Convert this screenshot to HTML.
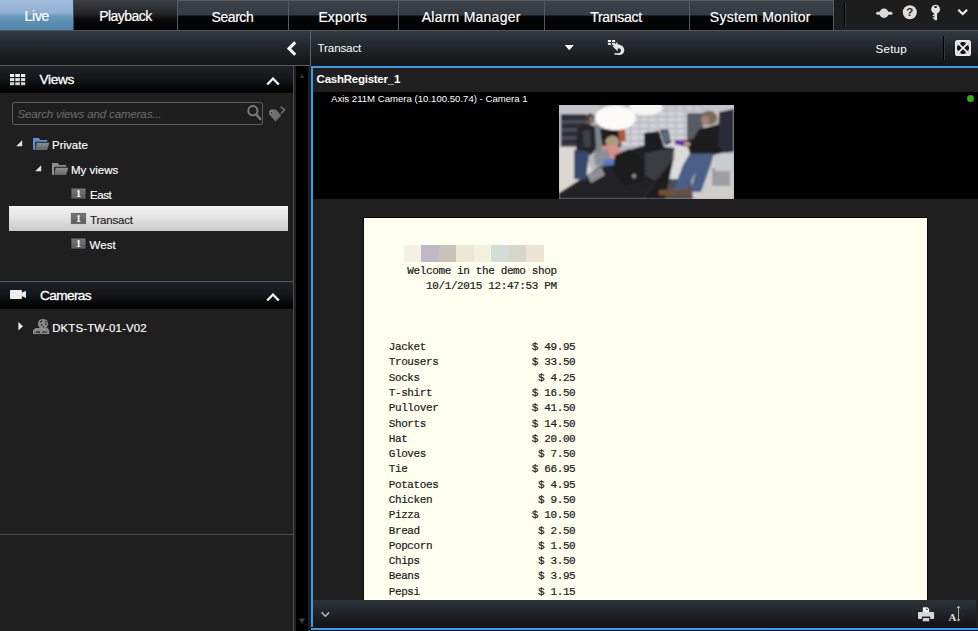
<!DOCTYPE html>
<html lang="en">
<head>
<meta charset="utf-8">
<title>Smart Client - Transact</title>
<style>
*{box-sizing:border-box;margin:0;padding:0}
html,body{width:978px;height:631px;overflow:hidden;background:#1f1f1f}
body{position:relative;font-family:"Liberation Sans",sans-serif;color:#fff;font-size:13px}
.a{position:absolute}
.t{position:absolute;white-space:nowrap;line-height:1;transform-origin:0 0}
/* tabs */
#tabs{left:0;top:0;width:978px;height:30px;background:#1d1d1d}
.tab{position:absolute;top:0;height:30px;border-left:1px solid #555b60;border-top:1px solid #555b60;
 background:linear-gradient(#3a4149 0,#363c43 14px,#060606 15px,#030303 100%)}
.tt{font-size:14px;-webkit-text-stroke:0.2px #fff}
.ltab{position:absolute;top:0;height:30px}
#live{left:0;width:73px;background:linear-gradient(#a3bcdc 0,#8fb0d2 13px,#6a9abd 16px,#5a8fb1 22px,#4f86a8 100%)}
#pb{left:73px;width:104px;border-left:1px solid #3d4c5a;background:linear-gradient(#3c3f43 0,#2f3235 8px,#1d1f21 15px,#0b0b0c 19px,#000 100%)}
/* toolbar */
#tb{left:0;top:30px;width:978px;height:36px;border-top:1px solid #50565b;
 background:linear-gradient(#333a41 0,#262b30 12px,#191c1f 26px,#111315 100%)}
/* sidebar */
.hdr{position:absolute;left:0;width:293px;height:28px;border-top:1px solid #5a5d5f;
 background:linear-gradient(#1e2226 0,#14171a 12px,#050606 22px,#000 100%)}
.ln{position:absolute;background:#4a4c4e}
.row{position:absolute;-webkit-text-stroke:0.15px;font-size:11.5px;line-height:1;white-space:nowrap}
/* receipt */
#rc{left:364px;top:218px;width:563px;height:382px;background:#fffff0;box-shadow:0 0 0 1px #0a0a0a}
#rc pre{position:absolute;left:24.7px;top:45.55px;-webkit-text-stroke:0.22px #1e1e1e;font-family:"Liberation Mono",monospace;font-size:11px;letter-spacing:-0.38px;
 line-height:15.29px;color:#1e1e1e;white-space:pre}
</style>
</head>
<body>

<!-- ===== top tabs ===== -->
<div id="tabs" class="a">
  <div id="live" class="ltab"></div>
  <div id="pb" class="ltab"></div>
  <div class="tab" style="left:177px;width:111px"></div>
  <div class="tab" style="left:288px;width:110px"></div>
  <div class="tab" style="left:398px;width:146px"></div>
  <div class="tab" style="left:544px;width:145px"></div>
  <div class="tab" style="left:689px;width:145px;border-right:1px solid #555b60"></div>
  <span class="t tt" style="left:24.6px;top:8.8px;letter-spacing:-0.3px">Live</span>
  <span class="t tt" style="left:99.2px;top:8.8px;letter-spacing:-0.53px">Playback</span>
  <span class="t tt" style="left:211.6px;top:10px;letter-spacing:-0.45px">Search</span>
  <span class="t tt" style="left:318.4px;top:10px;letter-spacing:0.14px">Exports</span>
  <span class="t tt" style="left:421.7px;top:10px;letter-spacing:0.25px">Alarm Manager</span>
  <span class="t tt" style="left:590.2px;top:10px;letter-spacing:-0.29px">Transact</span>
  <span class="t tt" style="left:709.8px;top:10px;letter-spacing:0.26px">System Monitor</span>
  <div class="a" style="left:844px;top:3px;width:1px;height:24px;background:#000"></div>
  <div class="a" style="left:845px;top:3px;width:1px;height:24px;background:#383838"></div>
  <svg class="a" style="left:870px;top:0" width="108" height="30" viewBox="870 0 108 30">
    <!-- connector -->
    <rect x="876" y="11.8" width="16.5" height="3" rx="1.5" fill="#d6d6d6"/>
    <ellipse cx="884" cy="13.3" rx="4.6" ry="4.7" fill="#d9d9d9"/>
    <!-- help -->
    <circle cx="909.8" cy="12.2" r="7" fill="#dedede"/>
    <text x="909.8" y="16.4" text-anchor="middle" font-family="Liberation Sans, sans-serif" font-weight="bold" font-size="11.5" fill="#2a2a2a">?</text>
    <!-- key -->
    <circle cx="935.6" cy="9.2" r="4.4" fill="#e2e2e2"/>
    <rect x="934.3" y="12" width="2.8" height="8.2" fill="#e2e2e2"/>
    <rect x="932.8" y="14.6" width="2" height="1.4" fill="#e2e2e2"/>
    <rect x="932.8" y="17.2" width="2" height="1.4" fill="#e2e2e2"/>
    <ellipse cx="935.6" cy="7" rx="1.5" ry="1" fill="#1b1b1b"/>
    <!-- chevron -->
    <path d="M958.3 9.8 L962.7 14 L967.1 9.8" fill="none" stroke="#f2f2f2" stroke-width="2"/>
  </svg>
</div>

<!-- ===== toolbar ===== -->
<div id="tb" class="a">
  <div class="a" style="left:310px;top:0;width:1px;height:35px;background:#5e6367"></div>
  <svg class="a" style="left:284px;top:7px" width="16" height="20" viewBox="284 38 16 20">
    <path d="M295.2 42.4 L289 48.6 L295.2 54.8" fill="none" stroke="#fff" stroke-width="3"/>
  </svg>
  <span class="t" style="left:317.6px;top:11px;font-size:11.6px;letter-spacing:-0.14px">Transact</span>
  <svg class="a" style="left:560px;top:5px" width="70" height="24" viewBox="560 36 70 24">
    <path d="M564.8 44.9 L573.8 44.9 L569.3 50.2 Z" fill="#fff"/>
    <g fill="#e6e6e6">
      <rect x="607.9" y="40" width="3.1" height="2.2" fill="#fff"/><rect x="612" y="40" width="3.1" height="2.2" fill="#fff"/>
      <rect x="607.9" y="43" width="3.1" height="2.1" fill="#d4d4d4"/><rect x="612" y="43" width="3.1" height="2.1" fill="#d4d4d4"/>
      <path d="M612.6 46.2 L617.5 42 L617.6 44.6 C621.5 44.6 624.4 47 624.3 50.2 C624.2 53.4 621.5 55.2 618.5 55.1 L614.2 54.6 L614.6 53 L617.8 53.3 C619.8 53.3 621 52.2 621 50.6 C621 49 619.6 48.4 617.7 48.6 L617.8 51.6 Z"/>
    </g>
  </svg>
  <span class="t" style="left:875.6px;top:11.6px;font-size:11.6px;letter-spacing:0.2px">Setup</span>
  <div class="a" style="left:943px;top:5px;width:1px;height:24px;background:#000"></div>
  <div class="a" style="left:944px;top:5px;width:1px;height:24px;background:#33373b"></div>
  <svg class="a" style="left:953px;top:7px" width="20" height="20" viewBox="953 38 20 20">
    <rect x="956" y="41" width="14" height="14" rx="1.6" fill="#141516" stroke="#e8e8e8" stroke-width="2"/>
    <path d="M957 42 h4.8 l-4.8 4.8z M969 42 v4.8 l-4.8 -4.8z M957 54 v-4.8 l4.8 4.8z M969 54 h-4.8 l4.8 -4.8z" fill="#b4b4b4"/>
    <path d="M957.6 42.6 L968.4 53.4 M968.4 42.6 L957.6 53.4" stroke="#fafafa" stroke-width="1.5"/>
  </svg>
</div>

<!-- ===== sidebar ===== -->
<div class="hdr" style="top:65px">
  <svg class="a" style="left:9px;top:7px" width="18" height="14" viewBox="9 73 18 14">
    <g fill="#f0f0f0">
      <rect x="10" y="74" width="4.2" height="3"/><rect x="15.3" y="74" width="4.6" height="3"/><rect x="21" y="74" width="4.2" height="3"/>
      <rect x="10" y="78.1" width="4.2" height="3" fill="#e2e2e2"/><rect x="15.3" y="78.1" width="4.6" height="3" fill="#e2e2e2"/><rect x="21" y="78.1" width="4.2" height="3" fill="#e2e2e2"/>
      <rect x="10" y="82.2" width="4.2" height="3" fill="#d2d2d2"/><rect x="15.3" y="82.2" width="4.6" height="3" fill="#d2d2d2"/><rect x="21" y="82.2" width="4.2" height="3" fill="#d2d2d2"/>
    </g>
  </svg>
  <span class="t" style="left:39.6px;top:6.6px;font-size:13.7px;letter-spacing:-0.4px;-webkit-text-stroke:0.3px #fff">Views</span>
  <svg class="a" style="left:264px;top:8px" width="18" height="14" viewBox="264 74 18 14">
    <path d="M267.2 84.6 L273 78.6 L278.8 84.6" fill="none" stroke="#fff" stroke-width="2.2"/>
  </svg>
</div>

<!-- search box -->
<div class="a" style="left:12px;top:102px;width:251px;height:23px;border:1px solid #5c5c5c;border-radius:2px;background:#1e1e1e"></div>
<span class="t" style="left:17.4px;top:108.2px;font-size:11.6px;letter-spacing:-0.18px;font-style:italic;color:#6c6c6c">Search views and cameras...</span>
<svg class="a" style="left:244px;top:103px" width="46" height="21" viewBox="244 103 46 21">
  <circle cx="252.9" cy="110.7" r="4.6" fill="none" stroke="#7a7a7a" stroke-width="2"/>
  <path d="M256.2 114.2 L260.4 119.2" stroke="#787878" stroke-width="2.4" stroke-linecap="round"/>
  <path d="M269 111.2 L271 109.2 L276 109.6 L281.2 115.6 L275.6 121.4 L269.2 114.6 Z" fill="#6f6f6f"/>
  <rect x="270.6" y="111.6" width="1.9" height="1.9" fill="#1f1f1f" stroke="#9a9a9a" stroke-width="0.5"/>
  <path d="M280.6 106.6 L284.6 109.8 L281 113.6" fill="none" stroke="#6f6f6f" stroke-width="1.5"/>
</svg>

<!-- tree -->
<div class="a" style="left:9px;top:206px;width:279px;height:25px;background:linear-gradient(#f3f3f3 0,#e4e4e4 45%,#cacaca 100%)"></div>

<svg class="a" style="left:0;top:132px" width="160" height="125" viewBox="0 132 160 125">
  <defs>
    <linearGradient id="gf" x1="0" y1="0" x2="0" y2="1"><stop offset="0" stop-color="#8e8e8e"/><stop offset="1" stop-color="#666"/></linearGradient>
    <linearGradient id="g1" x1="0" y1="0" x2="0" y2="1"><stop offset="0" stop-color="#747474"/><stop offset="0.5" stop-color="#6c6c6c"/><stop offset="0.55" stop-color="#646464"/><stop offset="1" stop-color="#606060"/></linearGradient>
  </defs>
  <!-- expanders -->
  <path d="M22.2 140.2 L22.2 146.2 L16.2 146.2 Z" fill="#e2e2e2"/>
  <path d="M41.2 165.2 L41.2 171.2 L35.2 171.2 Z" fill="#e2e2e2"/>
  <!-- folder Private (blue back) -->
  <path d="M33 138 H39 L40 140.1 H47.2 V141.8 H35.2 V149.8 H33 Z" fill="#5b93d0"/>
  <path d="M36.7 142.7 H49.3 L47.2 149.9 H35.4 Z" fill="url(#gf)"/>
  <!-- folder My views (gray back) -->
  <path d="M52 163 H58 L59 165.1 H66.2 V166.8 H54.2 V174.8 H52 Z" fill="#909090"/>
  <path d="M55.7 167.7 H68.3 L66.2 174.9 H54.4 Z" fill="url(#gf)"/>
  <!-- view icons -->
  <g font-family="Liberation Serif, serif" font-size="10" font-weight="bold" fill="#fff" text-anchor="middle">
    <rect x="71" y="188" width="15" height="11" fill="url(#g1)" stroke="#171717" stroke-width="0.7"/><text x="78.6" y="197.4">1</text>
    <rect x="71.3" y="213.3" width="14.4" height="10.4" fill="url(#g1)" stroke="#595959" stroke-width="0.7"/><text x="78.6" y="222.4">1</text>
    <rect x="71" y="238" width="15" height="11" fill="url(#g1)" stroke="#171717" stroke-width="0.7"/><text x="78.6" y="247.4">1</text>
  </g>
</svg>
<span class="row" style="left:52px;top:139.7px">Private</span>
<span class="row" style="left:71px;top:164.7px">My views</span>
<span class="row" style="left:90px;top:189.7px;letter-spacing:-0.45px">East</span>
<span class="row" style="left:90px;top:214.7px;color:#1c1c1c;letter-spacing:-0.19px">Transact</span>
<span class="row" style="left:89.6px;top:239.7px">West</span>

<div class="hdr" style="top:281px">
  <svg class="a" style="left:9px;top:7px" width="18" height="12" viewBox="9 289 18 12">
    <rect x="10" y="290" width="11.9" height="9" rx="0.8" fill="#eeeeee"/>
    <path d="M21.5 292.8 L26 290.8 V298 L21.5 296 Z" fill="#e6e6e6"/>
  </svg>
  <span class="t" style="left:40px;top:6.6px;font-size:13.7px;letter-spacing:-0.65px;-webkit-text-stroke:0.3px #fff">Cameras</span>
  <svg class="a" style="left:264px;top:8px" width="18" height="14" viewBox="264 290 18 14">
    <path d="M267.2 300.6 L273 294.6 L278.8 300.6" fill="none" stroke="#fff" stroke-width="2.2"/>
  </svg>
</div>
<svg class="a" style="left:14px;top:316px" width="40" height="22" viewBox="14 316 40 22">
  <path d="M18.4 322 L23 326.2 L18.4 330.4 Z" fill="#e8e8e8"/>
  <g fill="#8c8c8c">
    <circle cx="43" cy="323.9" r="5"/>
    <path d="M35.6 328 H47.4 L49.2 330.2 V333.9 H33 V330.2 Z"/>
  </g>
  <path d="M40 322.5 L42.4 320.3 M41 325.9 L42.2 324.1 M44.6 321.7 H47 M44.8 324.1 H46.8 M43.4 326.1 L44 327.5" stroke="#2a2a2a" stroke-width="1.1" fill="none"/>
  <rect x="34.2" y="331.8" width="0.9" height="0.9" fill="#222"/>
  <rect x="36.2" y="331.4" width="3.8" height="1.5" fill="#222"/>
  <path d="M42.2 332.8 L43.2 331.4 L44.2 332.8 L45.2 331.4 L46.2 332.8 L47.2 331.4" stroke="#222" stroke-width="0.9" fill="none"/>
</svg>
<span class="row" style="left:52.2px;top:322.5px;letter-spacing:0.1px">DKTS-TW-01-V02</span>

<div class="ln" style="left:0;top:534px;width:293px;height:1px"></div>
<div class="ln" style="left:293px;top:66px;width:1px;height:565px"></div>
<div class="a" style="left:293px;top:65px;width:17px;height:1px;background:#5a5d5f"></div>

<!-- scroll strip -->
<div class="a" style="left:296px;top:66px;width:12px;height:565px;background:#000"></div>
<svg class="a" style="left:296px;top:66px" width="12" height="565" viewBox="0 0 12 565">
  <path d="M3.5 12 L6 7.4 L8.5 12 Z" fill="#2b323c"/>
  <path d="M3 552.4 L9 552.4 L6 558 Z" fill="#3c4046"/>
</svg>

<!-- ===== main pane ===== -->
<div class="a" style="left:311px;top:66px;width:667px;height:2px;background:#3a9be8"></div>
<div class="a" style="left:311px;top:66px;width:2px;height:564px;background:#3a9be8"></div>
<div class="a" style="left:311px;top:628px;width:667px;height:2px;background:#3a9be8"></div>
<div class="a" style="left:311px;top:627px;width:667px;height:1px;background:#0a0a0a"></div>
<div class="a" style="left:311px;top:630px;width:667px;height:1px;background:#101010"></div>

<span class="t" style="left:316.6px;top:74.4px;font-size:11.5px;font-weight:bold;letter-spacing:-0.25px">CashRegister_1</span>

<div class="a" style="left:313px;top:92px;width:665px;height:107px;background:#000"></div>
<span class="t" style="left:331px;top:93.6px;font-size:9.6px">Axis 211M Camera (10.100.50.74) - Camera 1</span>
<div class="a" style="left:967px;top:95px;width:7px;height:7px;border-radius:50%;background:#2eb012"></div>

<!-- camera image -->
<svg class="a" style="left:559px;top:105px" width="175" height="94" viewBox="0 0 175 94">
  <defs>
    <filter id="bl" x="-5%" y="-5%" width="110%" height="110%"><feGaussianBlur stdDeviation="0.8"/></filter>
    <clipPath id="cp"><rect width="175" height="94"/></clipPath>
    <pattern id="shelf" width="9" height="6" patternUnits="userSpaceOnUse"><rect width="9" height="6" fill="#bcbfc5"/><rect x="0.8" y="1" width="6.6" height="3.2" fill="#d6d8dc"/></pattern>
    <pattern id="dshelf" width="8" height="8" patternUnits="userSpaceOnUse"><rect width="8" height="8" fill="#2f3237"/><rect y="0" width="8" height="1.6" fill="#5d6168"/></pattern>
  </defs>
  <rect width="175" height="94" fill="#b6b7bb"/>
  <g clip-path="url(#cp)"><g filter="url(#bl)">
    <!-- back wall / shelves -->
    <rect x="-4" y="-4" width="184" height="52" fill="#b4b7bd"/>
    <rect x="62" y="2" width="82" height="40" fill="url(#shelf)"/>
    <rect x="0" y="0" width="40" height="9" fill="#c3c6cb"/>
    <rect x="2" y="9" width="25" height="33" fill="url(#dshelf)"/>
    <rect x="26" y="20" width="20" height="28" fill="#7d868d"/>
    <rect x="128" y="8" width="16" height="30" fill="#575b64"/>
    <rect x="144" y="0" width="31" height="16" fill="#c6c7cb"/>
    <!-- floors -->
    <path d="M0 42 L20 42 L34 66 L0 88 Z" fill="#dbd8d3"/>
    <path d="M106 40 L175 40 L175 94 L96 94 Z" fill="#d0cecb"/>
    <path d="M112 40 L132 40 L132 74 L112 74 Z" fill="#dcdcdc"/>
    <path d="M96 74 L132 74 L134 94 L90 94 Z" fill="#4d4f54"/>
    <rect x="153" y="63" width="18" height="18" fill="#9c9ea3"/>
    <rect x="156" y="48" width="19" height="18" fill="#c9cbd0"/>
    <!-- counter -->
    <path d="M0 94 L0 88 L30 69 L60 48 L86 40 L116 43 L112 56 L84 94 Z" fill="#202226"/>
    <path d="M86 46 L114 44 L110 58 L96 76 L86 70 Z" fill="#3b3d43"/>
    <path d="M84 94 L112 56 L116 47 L106 94 Z" fill="#1a1b1e"/>
    <path d="M28 70 L42 62 L46 70 L32 78 Z" fill="#8e9095"/>
    <!-- person behind -->
    <path d="M41 24 L60 22 L62 42 L44 44 Z" fill="#1b1b1d"/>
    <path d="M59 25 L66 24 L67 36 L61 37 Z" fill="#b4573a"/>
    <!-- woman -->
    <ellipse cx="53.4" cy="37" rx="7" ry="6.2" fill="#a99b7a"/>
    <path d="M43 41 L58 39 L63 48 L57 56 L42 52 Z" fill="#d78f8c"/>
    <path d="M35 50 L48 43 L52 54 L44 62 L36 60 Z" fill="#8b8f99"/>
    <path d="M44 55 L56 54 L56 60 L44 61 Z" fill="#5c78c0"/>
    <!-- chair -->
    <path d="M56 50 L70 44 L86 56 L84 76 L66 80 L54 68 Z" fill="#1a1a1c"/>
    <circle cx="75" cy="71" r="2.2" fill="#8a8a8e"/>
    <!-- POS / monitor -->
    <path d="M85 28 L100 26 L106 44 L88 48 L85 46 Z" fill="#1b1d21"/>
    <path d="M101 25 L109 24.5 L112 38 L106 40 Z" fill="#1e2024"/>
    <path d="M102.6 26.4 L108 26 L110.6 36.6 L106.6 38 Z" fill="#5d6f88"/>
    <!-- man left -->
    <ellipse cx="31" cy="13.6" rx="4.8" ry="5.2" fill="#4a4039"/>
    <ellipse cx="32.6" cy="15" rx="2.6" ry="3.4" fill="#8b7165"/>
    <path d="M18 24 L28 18 L36 22 L37 44 L31 50 L17 46 Z" fill="#25272c"/>
    <path d="M24 26 L31 25 L32 42 L25 42 Z" fill="#3d4046"/>
    <path d="M15 45 L30 47 L27 75 L15 74 Z" fill="#35486a"/>
    <!-- lamps -->
    <ellipse cx="56.4" cy="12.8" rx="20.4" ry="12.5" fill="#fbfaf8"/>
    <ellipse cx="87" cy="2.6" rx="16.6" ry="8" fill="#f6f5f0"/>
    <!-- man right -->
    <ellipse cx="150" cy="13" rx="8.4" ry="7.2" fill="#7b6a58"/>
    <ellipse cx="146.4" cy="15.6" rx="4.4" ry="4.6" fill="#a28273"/>
    <path d="M146 21 L158 19 L156 24 L148 25 Z" fill="#e4e4e6"/>
    <path d="M140 24 L160 19 L169 28 L167 47 L150 51 L131 49 L129 42 L120 40 L121 36 L134 34 Z" fill="#1a1a1e"/>
    <path d="M116 35 L128 35.6 L127.6 40.4 L116 39.6 Z" fill="#6a2aa8"/>
    <rect x="125" y="37" width="6" height="4" fill="#c09080"/>
    <path d="M131 48.5 L155 48.5 L151 62 L142 87 L131 87 L137 66 L128 86 L114 87 L124 60 Z" fill="#495e88"/>
    <path d="M100 85 L117 84.6 L118 90 L100 90.6 Z M120.6 83.6 L133 85 L133 90 L121 89 Z" fill="#77502f"/>
    <!-- right clothes -->
    <path d="M160 7 L175 4 L175 47 L165 48 L159 40 Z" fill="#2a2c38"/>
  </g></g>
</svg>

<!-- receipt -->
<div id="rc" class="a">
  <div class="a" style="left:39.7px;top:27.3px;width:140px;height:17px;background:linear-gradient(90deg,#f6f0e2 0,#f6f0e2 12.5%,#bfb8c9 12.5%,#bfb8c9 25%,#c9c2b9 25%,#c9c2b9 37.5%,#ede7d5 37.5%,#ede7d5 50%,#f1f1dd 50%,#f1f1dd 62.5%,#d2ddd9 62.5%,#d2ddd9 75%,#d6d6cd 75%,#d6d6cd 87.5%,#ede5d1 87.5%,#ede5d1 100%)"></div>
<pre>
   Welcome in the demo shop
      10/1/2015 12:47:53 PM



Jacket                 $ 49.95
Trousers               $ 33.50
Socks                   $ 4.25
T-shirt                $ 16.50
Pullover               $ 41.50
Shorts                 $ 14.50
Hat                    $ 20.00
Gloves                  $ 7.50
Tie                    $ 66.95
Potatoes                $ 4.95
Chicken                 $ 9.50
Pizza                  $ 10.50
Bread                   $ 2.50
Popcorn                 $ 1.50
Chips                   $ 3.50
Beans                   $ 3.95
Pepsi                   $ 1.15
</pre>
</div>

<!-- pane bottom toolbar -->
<div class="a" style="left:313px;top:600px;width:663px;height:27px;background:linear-gradient(#2c3238 0,#23282d 10px,#181b1e 20px,#121416 100%)">
  <svg class="a" style="left:5px;top:8px" width="16" height="12" viewBox="318 608 16 12">
    <path d="M321.6 612.4 L325.4 616.2 L329.2 612.4" fill="none" stroke="#aeb1b5" stroke-width="1.6"/>
  </svg>
  <svg class="a" style="left:603px;top:4px" width="48" height="20" viewBox="916 604 48 20">
    <path d="M922.8 607.2 H927.4 L929.2 609 V612.2 H922.8 Z" fill="#f2f2f2"/>
    <path d="M926.3 608 L928.4 610.1 H926.3 Z" fill="#3a3a3a"/>
    <rect x="918" y="612" width="16.1" height="7" rx="0.8" fill="#d6d6d6"/>
    <rect x="921.8" y="616.6" width="8.4" height="2.6" fill="#1a1d20"/>
    <rect x="922.8" y="618" width="6.4" height="3.3" fill="#d0d0d0"/>
    <text x="948.6" y="621.2" font-family="Liberation Serif, serif" font-weight="bold" font-size="11" fill="#dedede">A</text>
    <path d="M958.5 606.4 V620.8 M957 608.2 L958.5 606 L960 608.2 M957 619 L958.5 621.2 L960 619" fill="none" stroke="#a8a8a8" stroke-width="1"/>
  </svg>
</div>

</body>
</html>
